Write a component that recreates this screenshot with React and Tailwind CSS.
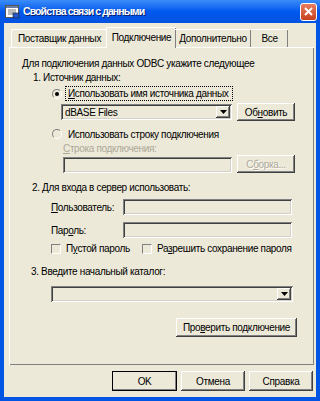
import React from 'react'

const FONT = { fontFamily: '"Liberation Sans", Arial, sans-serif' }

const raised =
  'shadow-[inset_-1px_-1px_#404040,inset_1px_1px_#ffffff,inset_-2px_-2px_#808080]'
const sunken =
  'shadow-[inset_1px_1px_#808080,inset_-1px_-1px_#ffffff,inset_2px_2px_#404040,inset_-2px_-2px_#d4d0c8]'

function Radio({ checked }) {
  return (
    <span className="w-[10px] h-[10px] shrink-0 rounded-full border border-t-[#808080] border-l-[#808080] border-b-white border-r-white bg-[#ECE9D8] flex items-center justify-center">
      {checked && <span className="w-[4px] h-[4px] rounded-full bg-black" />}
    </span>
  )
}

function Check() {
  return (
    <span className="w-[10px] h-[10px] border border-t-[#808080] border-l-[#808080] border-b-white border-r-white bg-[#ECE9D8] shrink-0" />
  )
}

function Button({ children, w, disabled, def, className = '' }) {
  return (
    <div
      className={`${w} h-full flex items-center justify-center ${raised} ${
        def ? 'outline outline-1 outline-black -outline-offset-1' : ''
      } ${disabled ? 'text-[#ACA899] [text-shadow:1px_1px_#ffffff]' : 'text-black'} ${className}`}
    >
      <span>{children}</span>
    </div>
  )
}

function Combo({ w, text }) {
  return (
    <div className={`${w} h-[16px] ${sunken} bg-[#ECE9D8] flex items-center pl-[4px] pr-[2px]`}>
      <span className="flex-1">{text}</span>
      <span className={`w-[14px] h-[12px] ${raised} flex items-center justify-center`}>
        <svg width="7" height="4" viewBox="0 0 7 4">
          <path d="M0 0h7L3.5 4z" fill="#000" />
        </svg>
      </span>
    </div>
  )
}

function Input({ w }) {
  return <div className={`${w} h-[16px] ${sunken} bg-[#ECE9D8]`} />
}

export default function App() {
  return (
    <div
      className="w-[320px] h-[401px] bg-[#0055E5] flex flex-col text-[10px] leading-[13px] tracking-[-0.35px] text-black overflow-hidden whitespace-nowrap"
      style={FONT}
    >
      {/* Title bar */}
      <div className="h-[23px] shrink-0 flex items-center pl-[5px] pr-[3px] bg-linear-to-b from-[#3B8CF8] via-[#0058EE] to-[#0353E0]">
        <svg width="15" height="14" viewBox="0 0 15 14" className="shrink-0">
          <rect x="0.5" y="0.5" width="13" height="12" fill="#fff" stroke="#555" />
          <rect x="1" y="1" width="12" height="2" fill="#6a7ba8" />
          <path d="M3 5h8M3 7h8M3 9h5" stroke="#777" />
          <rect x="8" y="8" width="6" height="5" fill="#2a56c6" stroke="#123" strokeWidth="0.6" />
        </svg>
        <span className="ml-[3px] text-white font-bold text-[10.5px] tracking-[-0.9px] [text-shadow:1px_1px_#0a1f6e]">
          Свойства связи с данными
        </span>
        <div className="flex-1" />
        <div className="w-[17px] h-[18px] rounded-[3px] border border-white bg-linear-to-b from-[#E97C5E] to-[#C6401C] flex items-center justify-center">
          <svg width="9" height="9" viewBox="0 0 9 9">
            <path d="M1 1l7 7M8 1l-7 7" stroke="#fff" strokeWidth="2" />
          </svg>
        </div>
      </div>

      {/* Body */}
      <div className="flex-1 mx-[4px] mb-[4px] bg-[#ECE9D8] flex flex-col pt-[5px] pl-[5px] pr-[2px]">
        {/* Tabs */}
        <div className="h-[19px] flex items-end pl-[2px] relative z-10">
          <div className="w-[96px] h-[18px] flex items-center justify-center border-t border-l border-white shadow-[inset_-1px_0_#808080] rounded-tl-[2px]">
            Поставщик данных
          </div>
          <div className="w-[70px] h-[21px] -mx-[1px] -mb-[1px] flex items-start pt-[3px] justify-center bg-[#ECE9D8] border-t border-l border-white shadow-[inset_-1px_0_#808080] rounded-tl-[2px]">
            Подключение
          </div>
          <div className="w-[76px] h-[18px] flex items-center justify-center border-t border-white shadow-[inset_-1px_0_#808080]">
            Дополнительно
          </div>
          <div className="w-[37px] h-[18px] flex items-center justify-center border-t border-white shadow-[inset_-1px_0_#808080]">
            Все
          </div>
        </div>

        {/* Panel */}
        <div className="h-[318px] border-t border-l border-white shadow-[inset_-1px_-1px_#808080] flex flex-col pt-[9px]">
          <div className="h-[13px] ml-[12px]">Для подключения данных ODBC укажите следующее</div>
          <div className="h-[13px] mt-[1px] ml-[23px]">1. Источник данных:</div>

          <div className="h-[15px] mt-[2px] ml-[42px] flex items-center">
            <Radio checked />
            <div className="ml-[3px] px-[2px] h-[15px] w-[168px] flex items-center border border-dotted border-black">
              <span>
                <u>И</u>спользовать имя источника данных
              </span>
            </div>
          </div>

          <div className="h-[18px] mt-[2px] ml-[51px] flex items-center">
            <Combo w="w-[171px]" text="dBASE Files" />
            <Button w="w-[58px]" className="ml-[5px]">
              Об<u>н</u>овить
            </Button>
          </div>

          <div className="h-[14px] mt-[6px] ml-[42px] flex items-center">
            <Radio />
            <span className="ml-[6px]">Использовать строку подключения</span>
          </div>

          <div className="h-[13px] mt-[1px] ml-[53px] text-[#ACA899]">
            <u>С</u>трока подключения:
          </div>

          <div className="h-[18px] ml-[53px] flex items-end">
            <Input w="w-[169px]" />
            <Button w="w-[58px]" disabled className="ml-[5px]">
              С<u>б</u>орка...
            </Button>
          </div>

          <div className="h-[13px] mt-[8px] ml-[22px]">2. Для входа в сервер использовать:</div>

          <div className="h-[16px] mt-[5px] ml-[41px] flex items-center">
            <span className="w-[72px]">
              <u>П</u>ользователь:
            </span>
            <Input w="w-[169px]" />
          </div>

          <div className="h-[16px] mt-[7px] ml-[41px] flex items-center">
            <span className="w-[72px]">
              Пар<u>о</u>ль:
            </span>
            <Input w="w-[169px]" />
          </div>

          <div className="h-[13px] mt-[4px] ml-[41px] flex items-center">
            <Check />
            <span className="ml-[5px] w-[76px]">
              П<u>у</u>стой пароль
            </span>
            <Check />
            <span className="ml-[5px]">
              Ра<u>з</u>решить сохранение пароля
            </span>
          </div>

          <div className="h-[13px] mt-[10px] ml-[21px]">3. Введите начальный каталог:</div>

          <div className="h-[16px] mt-[8px] ml-[41px] flex">
            <Combo w="w-[242px]" text="" />
          </div>

          <div className="h-[19px] mt-[16px] flex justify-end pr-[17px]">
            <Button w="w-[121px]">
              Про<u>в</u>ерить подключение
            </Button>
          </div>
        </div>

        {/* Bottom buttons */}
        <div className="h-[20px] mt-[6px] flex justify-end pr-[1px] gap-[4px]">
          <Button w="w-[65px]" def>
            OK
          </Button>
          <Button w="w-[64px]">Отмена</Button>
          <Button w="w-[64px]">Справка</Button>
        </div>
      </div>
    </div>
  )
}
